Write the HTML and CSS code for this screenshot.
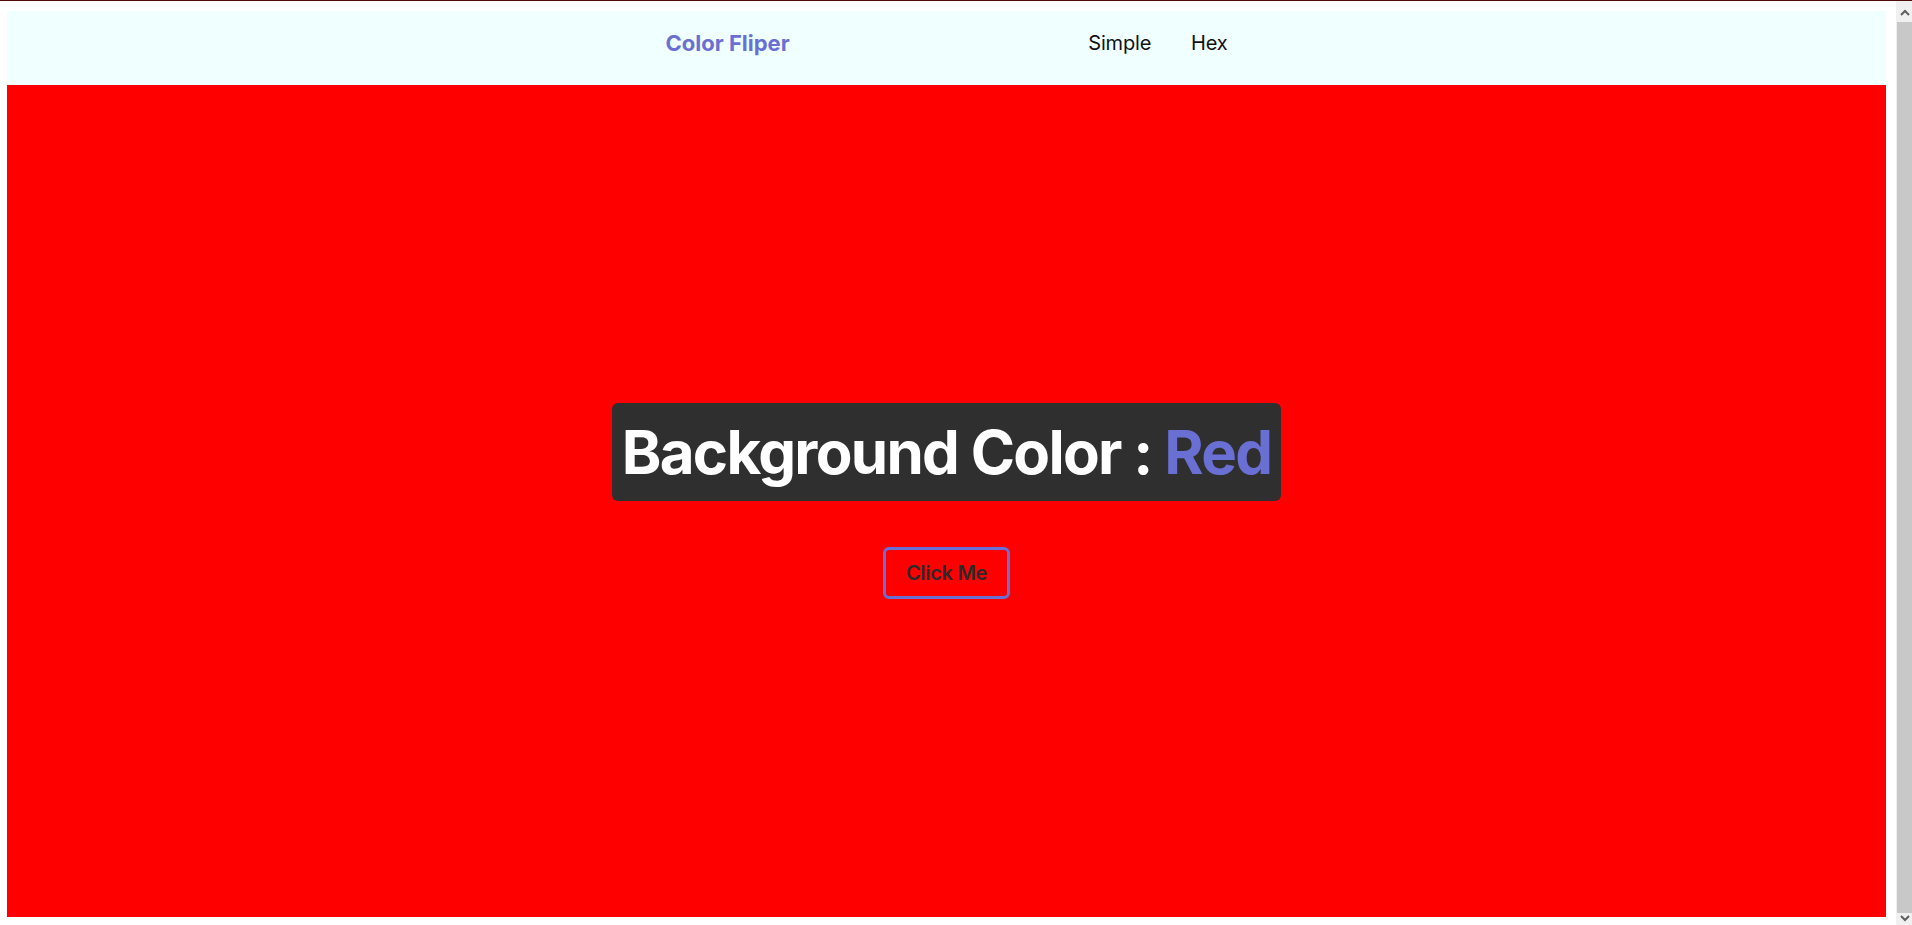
FILE: index.html
```html
<!DOCTYPE html>
<html lang="en">
<head>
<meta charset="utf-8">
<title>Color Fliper</title>
<link rel="stylesheet" href="styles.css">
</head>
<body>
<div class="window">
  <div class="page">
    <nav class="nav">
      <div class="nav-inner">
        <a class="brand" href="#">Color Fliper</a>
        <ul class="links">
          <li><a href="#">Simple</a></li>
          <li><a href="#">Hex</a></li>
        </ul>
      </div>
    </nav>
    <main class="main">
      <h2 class="title">Background Color : <span class="color">Red</span></h2>
      <button class="btn" type="button">Click Me</button>
    </main>
  </div>
  <div class="scrollbar" aria-hidden="true">
    <div class="sb-btn sb-up">
      <svg width="10" height="7" viewBox="0 0 10 7"><path d="M1 6 L5 2 L9 6" fill="none" stroke="#5f5f5f" stroke-width="2"/></svg>
    </div>
    <div class="sb-thumb"></div>
    <div class="sb-btn sb-down">
      <svg width="10" height="7" viewBox="0 0 10 7"><path d="M1 1 L5 5 L9 1" fill="none" stroke="#5f5f5f" stroke-width="2"/></svg>
    </div>
  </div>
</div>
</body>
</html>
```
FILE: styles.css
```css
* { box-sizing: border-box; }
html, body { overflow: hidden; }
body {
  margin: 0;
  border-top: 1px solid #4e0b0b;
  font-family: Inter, "Noto Sans", sans-serif;
  background: #ffffff;
}
.window {
  display: flex;
  height: 924px;
}
.page {
  flex: 1;
  display: flex;
  flex-direction: column;
  padding: 10px 10px 8px 7px;
}
.scrollbar {
  width: 16px;
  display: flex;
  flex-direction: column;
  background: #f0f0f0;
}
.sb-btn {
  display: flex;
  justify-content: flex-end;
  padding-right: 2px;
  background: #f0f0f0;
}
.sb-up { height: 21px; padding-top: 8px; }
.sb-down { height: 12px; padding-top: 2px; }
.sb-thumb {
  flex: 1;
  background: #c8c8c8;
  margin-left: 1px;
}
.nav {
  height: 74px;
  padding-bottom: 10px;
  background: #f0ffff;
  display: flex;
  align-items: center;
  justify-content: center;
}
.nav-inner {
  width: 562px;
  display: flex;
  align-items: center;
  justify-content: space-between;
}
.brand {
  color: #6a6fd3;
  font-weight: 700;
  font-size: 22px;
  text-decoration: none;
}
.links {
  list-style: none;
  margin: 0;
  padding: 0;
  display: flex;
  gap: 40px;
}
.links a {
  color: #111;
  text-decoration: none;
  font-size: 20px;
  letter-spacing: -0.2px;
}
.main {
  height: 832px;
  background: #ff0000;
  display: flex;
  flex-direction: column;
  align-items: center;
  justify-content: center;
  gap: 46px;
}
.title {
  margin: 0;
  height: 98px;
  padding: 0 10px;
  display: flex;
  align-items: center;
  background: #2f2f2f;
  border-radius: 6px;
  color: #ffffff;
  font-size: 60px;
  font-weight: 700;
  letter-spacing: -1.7px;
  white-space: pre;
}
.color { color: #6a6fd3; }
.btn {
  width: 127px;
  height: 52px;
  background: transparent;
  border: 3px solid #6a6fd3;
  border-radius: 6px;
  color: #2b2b2b;
  font-family: Inter, "Noto Sans", sans-serif;
  font-size: 20px;
  font-weight: 600;
  letter-spacing: -0.3px;
  cursor: pointer;
}
```
